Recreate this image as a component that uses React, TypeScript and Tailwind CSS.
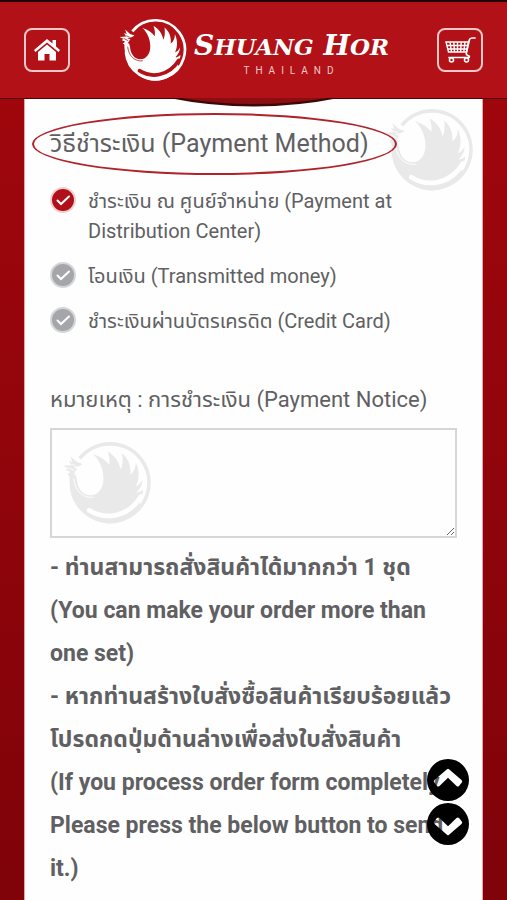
import { useState } from 'react';
import { clsx } from 'clsx';

const paymentMethods = [
  { id: 'center', label: 'ชำระเงิน ณ ศูนย์จำหน่าย (Payment at Distribution Center)' },
  { id: 'transfer', label: 'โอนเงิน (Transmitted money)' },
  { id: 'credit', label: 'ชำระเงินผ่านบัตรเครดิต (Credit Card)' },
];

const notes = [
  '- ท่านสามารถสั่งสินค้าได้มากกว่า 1 ชุด',
  '(You can make your order more than one set)',
  '- หากท่านสร้างใบสั่งซื้อสินค้าเรียบร้อยแล้ว',
  'โปรดกดปุ่มด้านล่างเพื่อส่งใบสั่งสินค้า',
  '(If you process order form completely. Please press the below button to send it.)',
];

// Phoenix in a ring. The gap under the body is painted in the background colour.
function Phoenix({ className, gapClass }: { className?: string; gapClass: string }) {
  return (
    <svg viewBox="62 56 278 260" className={className} aria-hidden="true">
      <path
        d="M117 110 A120 120 0 1 1 91 195"
        fill="none"
        stroke="currentColor"
        strokeWidth="11"
      />
      <path
        d="M85 158 C82 210 104 262 142 288 C165 304 190 311 210 311 C250 311 288 288 306 258 L300 236 C310 222 314 212 312 206 C304 214 296 216 292 215 C304 204 311 190 311 176 C304 188 297 194 290 196 C300 178 303 150 290 122 C290 140 284 152 273 160 C276 136 268 112 248 95 C250 115 250 130 243 144 C238 120 224 100 203 89 C209 105 210 118 208 130 C198 116 182 104 158 97 C176 113 190 140 190 172 C190 204 172 224 150 224 C124 224 110 200 108 176 L104 160 Z"
        fill="currentColor"
      />
      <path
        d="M146 270 C190 298 262 298 306 228"
        fill="none"
        className={gapClass}
        strokeWidth="15"
        strokeLinecap="round"
      />
      <path
        d="M98 172 C102 212 128 234 160 230"
        fill="none"
        className={gapClass}
        strokeWidth="3"
      />
      <path d="M99 172 C94 160 104 150 109 142 L96 138 L114 134 L126 127 L108 121 L88 103 L94 121 L83 117 L92 131 L65 133 L82 141 L73 145 L88 152 L78 160 Z" fill="currentColor" />
      <path d="M92 128 L106 134 M82 139 L100 148" fill="none" className={gapClass} strokeWidth="3" />
    </svg>
  );
}

function HomeIcon() {
  return (
    <svg viewBox="0 0 28 24" className="w-7 h-6" fill="currentColor" aria-hidden="true">
      <path d="M14 1 L1 12 L2.5 14 L14 4.5 L25.500 14 L27 12 L23 8.500 V2 H19.500 V5.500 Z" />
      <path d="M14 6.500 L5 14 V22.500 H11.500 V16 H16.500 V22.500 H23 V14 Z" />
    </svg>
  );
}

function CartIcon() {
  return (
    <svg viewBox="0 0 32 28" className="w-8 h-7" fill="none" stroke="currentColor" aria-hidden="true">
      <path d="M31 2 H28 Q26 2 25.300 4 L22.300 17 Q22 19 24 19.500 Q26 20 25 21.500 H5" strokeWidth="1.700" strokeLinecap="round" />
      <path d="M2 6 H24.500 L22.500 16 H4.500 Z M3 9.500 H23.500 M4 13 H23 M6 6 L7.500 16 M9.800 6 L10.500 16 M13.500 6 V16 M17.200 6 L16.600 16 M21 6 L19.800 16" strokeWidth="1.400" />
      <circle cx="7.500" cy="24" r="2" strokeWidth="1.600" />
      <circle cx="22.500" cy="24" r="2" strokeWidth="1.600" />
    </svg>
  );
}

// The chevron is cut out of the disc, so the page shows through it.
function ScrollButton({ label, down, onClick }: { label: string; down?: boolean; onClick: () => void }) {
  return (
    <button type="button" aria-label={label} onClick={onClick} className="block">
      <svg viewBox="0 0 42 42" className={clsx('size-[42px]', down && 'rotate-180')}>
        <path
          fillRule="evenodd"
          d="M21 0 A21 21 0 1 1 21 42 A21 21 0 1 1 21 0 Z M20 10.200 Q21 9.200 22 10.200 L34.500 21 Q35.800 22.200 34.800 23.500 L32 27 Q30.800 28.200 29.500 27 L21 18.800 L12.500 27 Q11.200 28.200 10 27 L7.200 23.500 Q6.200 22.200 7.500 21 Z"
        />
      </svg>
    </button>
  );
}

function Header() {
  return (
    <header className="relative z-10 bg-[#b21117] border-t-2 border-t-[#230003] border-b border-b-[#4a0508] text-white">
      <div className="flex items-center justify-between px-6 h-24">
        <a
          href="#home"
          aria-label="Home"
          className="flex items-center justify-center w-[46px] h-11 rounded-lg border-2 border-[#f6c9c8]"
        >
          <HomeIcon />
        </a>
        <div className="flex items-center gap-1.5">
          <Phoenix className="w-[70px] h-16" gapClass="stroke-[#b21117]" />
          <div className="flex flex-col items-center pt-1">
            <span className="font-['DejaVu_Serif',serif] italic font-bold text-[28px] leading-9 whitespace-nowrap">
              S<span className="text-[23px]">HUANG</span> H<span className="text-[23px]">OR</span>
            </span>
            <span className="text-[10px] leading-3 tracking-[6px] text-[#f6c9c8]">THAILAND</span>
          </div>
        </div>
        <a
          href="#cart"
          aria-label="Cart"
          className="flex items-center justify-center w-[46px] h-11 rounded-lg border-2 border-[#f6c9c8]"
        >
          <CartIcon />
        </a>
      </div>
      <svg
        viewBox="0 0 170 10"
        className="absolute top-full left-1/2 -translate-x-1/2 w-[170px] h-[10px]"
        aria-hidden="true"
      >
        <path d="M0 0 Q85 17 170 0 Z" fill="#3a0a08" />
        <path d="M12 0 Q85 12 158 0 Z" fill="#8c0d12" />
      </svg>
    </header>
  );
}

export default function App() {
  const [method, setMethod] = useState('center');
  const [notice, setNotice] = useState('');

  return (
    <div className="min-h-screen flex flex-col bg-linear-to-b from-[#a3070d] to-[#7f0309] font-[Roboto,'Noto_Sans_Thai',sans-serif] text-[#606062]">
      <Header />

      <main className="relative flex-1 mx-6 px-[25px] pt-[25px] pb-2 bg-[#fefefe] border-x border-[#e9a5a5]">
        <Phoenix className="absolute top-2 right-2 w-[90px] h-[86px] text-[#e9e9ea]" gapClass="stroke-[#fefefe]" />

        <h1 id="payment-method" className="relative w-fit text-[25px] leading-10 whitespace-nowrap">
          วิธีชำระเงิน (Payment Method)
          <span className="absolute -left-[18px] -right-7 -inset-y-[11px] rounded-[50%] border-2 border-[#b0232a]" />
        </h1>

        <div role="radiogroup" aria-labelledby="payment-method" className="mt-[22px] flex flex-col gap-[15px]">
          {paymentMethods.map((item) => (
            <label key={item.id} className="flex items-start gap-3 text-xl leading-[30px] cursor-pointer">
              <span className="relative shrink-0 size-[26px] mt-px">
                <input
                  type="radio"
                  name="payment"
                  value={item.id}
                  checked={method === item.id}
                  onChange={() => setMethod(item.id)}
                  className="block appearance-none size-[26px] rounded-full border-2 border-[#d6d6d9] bg-[#a5a6aa] checked:border-[#f1cfd1] checked:bg-[#b01019]"
                />
                <svg viewBox="0 0 26 26" className="absolute inset-0 pointer-events-none" aria-hidden="true">
                  <path d="M7.500 13.500 L11 17 L19 9.500" fill="none" stroke="#fff" strokeWidth="2" strokeLinecap="round" />
                </svg>
              </span>
              <span>{item.label}</span>
            </label>
          ))}
        </div>

        <label htmlFor="notice" className="block mt-12 text-[22px] leading-8">
          หมายเหตุ : การชำระเงิน (Payment Notice)
        </label>
        <div className="relative mt-3">
          <Phoenix className="absolute top-3 left-3 w-[90px] h-[86px] text-[#e9e9ea]" gapClass="stroke-[#fefefe]" />
          <textarea
            id="notice"
            value={notice}
            onChange={(e) => setNotice(e.target.value)}
            className="relative block w-full h-[110px] p-3 border-2 border-[#d6d6d7] bg-transparent text-lg"
          />
        </div>

        <div className="mt-2 text-[23px] leading-[43px] font-bold">
          {notes.map((line) => (
            <p key={line}>{line}</p>
          ))}
        </div>
      </main>

      <div className="fixed z-20 right-[38px] bottom-[55px] flex flex-col gap-0.5 text-black">
        <ScrollButton label="Scroll up" onClick={() => window.scrollTo({ top: 0, behavior: 'smooth' })} />
        <ScrollButton
          label="Scroll down"
          down
          onClick={() => window.scrollTo({ top: document.body.scrollHeight, behavior: 'smooth' })}
        />
      </div>
    </div>
  );
}
